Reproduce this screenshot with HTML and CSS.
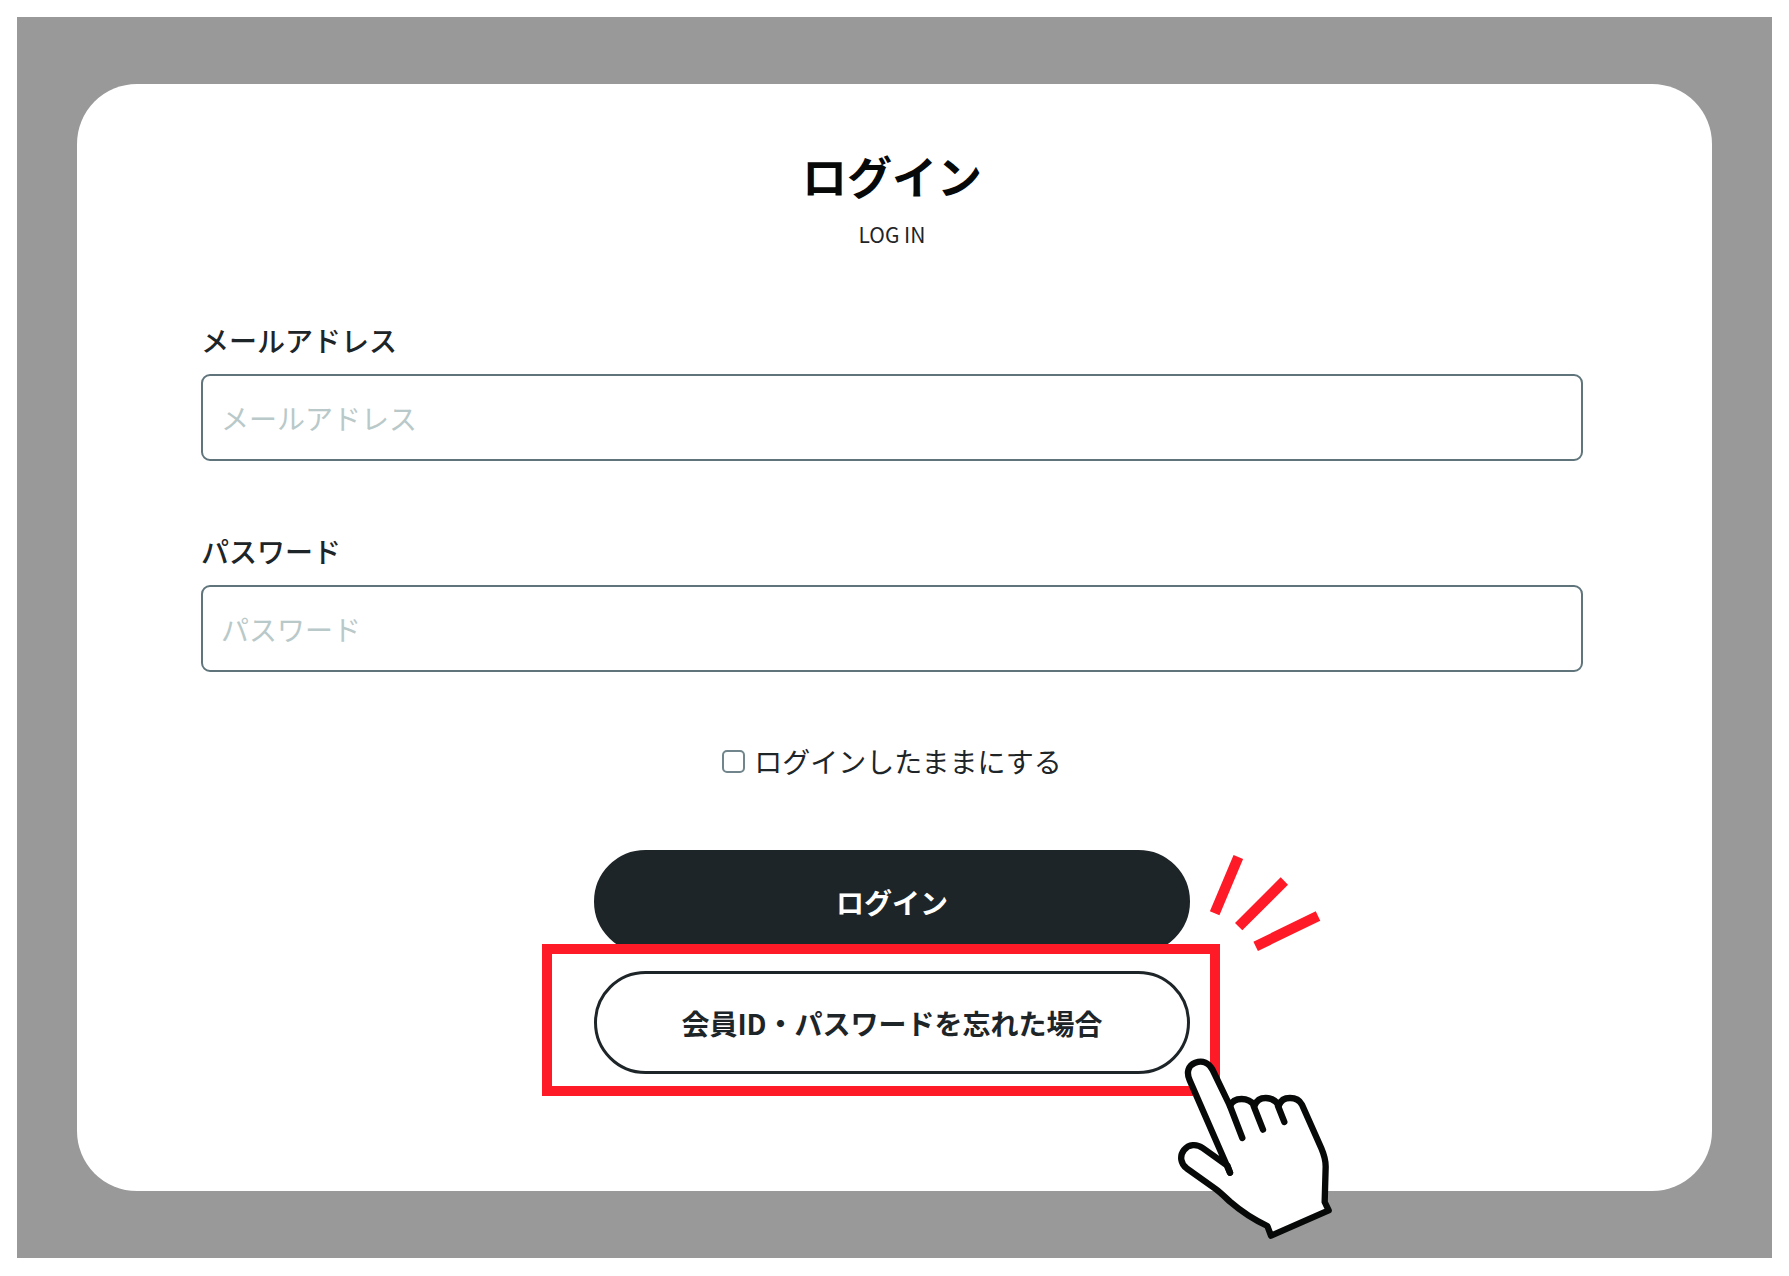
FILE: index.html
```html
<!DOCTYPE html>
<html lang="ja">
  <head>
    <meta charset="UTF-8" />
    <meta name="viewport" content="width=device-width, initial-scale=1.0" />
    <title>ログイン</title>
    <link rel="stylesheet" href="styles.css">
  </head>
  <body>
    <main class="overlay">
      <form class="login-card">
        <h1 class="title">ログイン</h1>
        <p class="subtitle">LOG IN</p>

        <div class="fields">
          <div class="field">
            <label for="email">メールアドレス</label>
            <input type="email" id="email" placeholder="メールアドレス" />
          </div>
          <div class="field">
            <label for="password">パスワード</label>
            <input type="password" id="password" placeholder="パスワード" />
          </div>
        </div>

        <div class="remember">
          <input type="checkbox" id="remember" />
          <label for="remember">ログインしたままにする</label>
        </div>

        <div class="actions">
          <button type="submit" class="btn btn-login">ログイン</button>
          <div class="forgot">
            <button type="button" class="btn btn-forgot">会員ID・パスワードを忘れた場合</button>
            <div class="highlight"></div>
            <svg class="rays" viewBox="0 0 540 360" aria-hidden="true">
              <path d="M235 51L164 220M373 123L236 260M474 228L287 319" />
            </svg>
            <svg class="hand" viewBox="0 0 600 660" aria-hidden="true">
              <path class="hand-shape" d="M240 428L119 151C108 126 115 107 136 98C158 90 177 98 188 120L240 228C246 213 257 207 275 207C294 207 306 216 314 226C320 211 330 204 347 204C366 204 378 213 387 226C392 211 402 204 420 204C438 204 449 211 456 224L514 355C523 376 527 390 527 410L524 516L536 541L363 617L352 588C305 566 270 541 240 515C225 501 212 488 197 477L110 415C92 401 88 378 102 360C116 342 140 341 158 354L232 407Z" />
              <path class="hand-line" d="M240 228L277 324M311 228L339 299M384 228L403 276M232 407L240 428" />
            </svg>
          </div>
        </div>
      </form>
    </main>
  </body>
</html>
```

FILE: styles.css
```css
* {
  box-sizing: border-box;
}
body {
  margin: 17px;
  background-color: #fff;
  color: #1e2528;
  font-family: "Noto Sans CJK JP", sans-serif;
  font-size: 28px;
  line-height: 40px;
}
.overlay {
  padding: 67px 60px;
  background-color: #999;
}
.login-card {
  padding: 60px 129px 117px 124px;
  border-radius: 60px;
  background-color: #fff;
}
.title {
  margin: 0;
  color: #060908;
  font-size: 45px;
  font-weight: 700;
  line-height: 64px;
  text-align: center;
}
.subtitle {
  margin: 12px 0 72px;
  font-size: 21px;
  line-height: 28px;
  text-align: center;
}
.fields {
  display: flex;
  flex-direction: column;
  gap: 70px;
}
.field {
  display: flex;
  flex-direction: column;
  gap: 14px;
}
.field label {
  font-weight: 500;
}
.field input {
  width: 100%;
  height: 87px;
  padding: 0 18px;
  border: 2px solid #5f757b;
  border-radius: 9px;
  background-color: #fff;
  color: inherit;
  font: inherit;
}
.field input::placeholder {
  color: #b9c9c9;
  opacity: 1;
}
.remember {
  display: flex;
  justify-content: center;
  align-items: center;
  gap: 9px;
  margin: 69px 0;
}
.remember input {
  appearance: none;
  width: 23px;
  height: 23px;
  margin: 0;
  border: 2px solid #71868c;
  border-radius: 5px;
  background-color: #fff;
}
.remember input:checked {
  background-color: #1e2528;
}
.actions {
  display: flex;
  flex-direction: column;
  gap: 18px;
  width: 100%;
  max-width: 596px;
  margin: 0 auto;
}
.btn {
  display: block;
  width: 100%;
  height: 103px;
  border: 3px solid #1e2528;
  border-radius: 52px;
  font: inherit;
  font-weight: 700;
  cursor: pointer;
}
.btn-login {
  background-color: #1e2528;
  color: #fff;
}
.btn-forgot {
  background-color: #fff;
  color: #1e2528;
}
.forgot {
  position: relative;
}

/* pointer marks drawn over the form */
.highlight {
  position: absolute;
  inset: -27px -30px -22px -52px;
  border: 10px solid #ff1a27;
  pointer-events: none;
}
.rays {
  position: absolute;
  top: -131px;
  right: -150px;
  width: 180px;
  height: 120px;
  fill: none;
  stroke: #ff1a27;
  stroke-width: 31;
  pointer-events: none;
}
.hand {
  position: absolute;
  top: 59px;
  right: -160px;
  width: 200px;
  height: 220px;
  stroke: #060908;
  stroke-width: 19;
  stroke-linecap: round;
  stroke-linejoin: round;
  pointer-events: none;
}
.hand-shape {
  fill: #fff;
}
.hand-line {
  fill: none;
}
```
